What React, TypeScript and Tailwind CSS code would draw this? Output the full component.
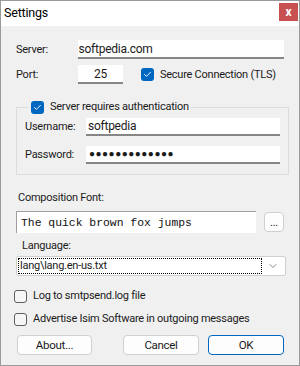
import { ChevronDown, Check } from 'lucide-react';

function Box({ checked }: { checked?: boolean }) {
  return checked ? (
    <span className="grid h-[13px] w-[13px] shrink-0 place-items-center rounded-[3px] bg-[#0067c0]">
      <Check size={9} strokeWidth={2.5} className="text-white" />
    </span>
  ) : (
    <span className="h-[13px] w-[13px] shrink-0 rounded-[3px] border border-[#5f5f5f] bg-[#f6f6f6]" />
  );
}

function Field({ value, className }: { value: string; className: string }) {
  return (
    <div className={`flex items-center border-b-2 border-[#868686] bg-white ${className}`}>
      {value}
    </div>
  );
}

function Button({ label, primary }: { label: string; primary?: boolean }) {
  return (
    <button
      type="button"
      className={`h-[20px] w-[76px] rounded-[4px] border bg-[#fdfdfd] text-[11.5px] tracking-[-0.3px] text-[#1b1b1b] ${
        primary ? 'border-[#0067c0]' : 'border-[#d0d0d0]'
      }`}
    >
      {label}
    </button>
  );
}

export default function App() {
  return (
    <div className="flex h-[366px] w-[300px] flex-col overflow-hidden border border-[#9a9a9a] bg-[#f0f0f0] font-['Roboto',sans-serif] text-[11px] leading-[14px] tracking-[-0.25px] text-[#1b1b1b]">
      <div className="flex h-[25px] shrink-0 items-start bg-white">
        <span className="ml-[3px] mt-[4px] text-[12.5px] leading-[16px] tracking-[-0.2px] text-black">Settings</span>
        <span className="ml-auto mr-[1px] mt-[2px] grid h-[18px] w-[19px] place-items-center bg-[#c75050] text-[12px] font-bold leading-none text-white">
          x
        </span>
      </div>

      <div className="flex flex-col px-[15px] pt-[14px]">
        <div className="flex h-[19px] items-center">
          <span className="w-[62px]">Server:</span>
          <Field value="softpedia.com" className="h-[19px] w-[208px] pl-[1px] text-[12px]" />
        </div>

        <div className="mt-[6px] flex h-[19px] items-center">
          <span className="w-[62px]">Port:</span>
          <Field value="25" className="h-[19px] w-[45px] justify-center text-[12px]" />
          <span className="ml-[18px] flex items-center gap-[6px]">
            <Box checked />
            Secure Connection (TLS)
          </span>
        </div>

        <fieldset className="mt-[16px] h-[75px] w-[270px] border border-[#dcdcdc] px-[8px]">
          <legend className="ml-[4px] flex items-center gap-[6px] px-[2px]">
            <Box checked />
            Server requires authentication
          </legend>
          <div className="mt-[4px] flex h-[18px] items-center">
            <span className="w-[61px]">Username:</span>
            <Field value="softpedia" className="h-[18px] w-[194px] pl-[2px] text-[12px]" />
          </div>
          <div className="mt-[10px] flex h-[18px] items-center">
            <span className="w-[61px]">Password:</span>
            <Field value="●●●●●●●●●●●●●" className="h-[18px] w-[194px] pl-[3px] text-[10px] tracking-[0.5px]" />
          </div>
        </fieldset>

        <span className="mt-[16px] ml-[2px]">Composition Font:</span>
        <div className="mt-[6px] flex items-center">
          <div className="flex h-[22px] w-[240px] items-center border-l border-t border-[#a0a0a0] bg-white pl-[4px] font-['Liberation_Mono',monospace] text-[11.4px] tracking-[0px] text-[#111]">
            The quick brown fox jumps
          </div>
          <button
            type="button"
            className="ml-[8px] h-[20px] w-[20px] rounded-[4px] border border-[#d0d0d0] bg-[#fdfdfd] text-[11px] leading-none"
          >
            ...
          </button>
        </div>

        <span className="mt-[6px] ml-[6px]">Language:</span>
        <div className="mt-[3px] flex h-[20px] w-[270px] items-center rounded-[2px] border border-[#d0d0d0] bg-white p-[1px]">
          <div className="flex h-full flex-1 items-center border border-dotted border-black pl-[1px]">
            lang\lang.en-us.txt
          </div>
          <ChevronDown size={12} strokeWidth={1.5} className="mx-[5px] text-[#5f5f5f]" />
        </div>

        <div className="mt-[13px] ml-[-2px] flex items-center gap-[6px]">
          <Box />
          Log to smtpsend.log file
        </div>
        <div className="mt-[9px] ml-[-2px] flex items-center gap-[6px]">
          <Box />
          Advertise Isim Software in outgoing messages
        </div>

        <div className="mt-[9px] ml-[1px] flex items-center">
          <Button label="About..." />
          <span className="ml-[31px]">
            <Button label="Cancel" />
          </span>
          <span className="ml-[9px]">
            <Button label="OK" primary />
          </span>
        </div>
      </div>
    </div>
  );
}
